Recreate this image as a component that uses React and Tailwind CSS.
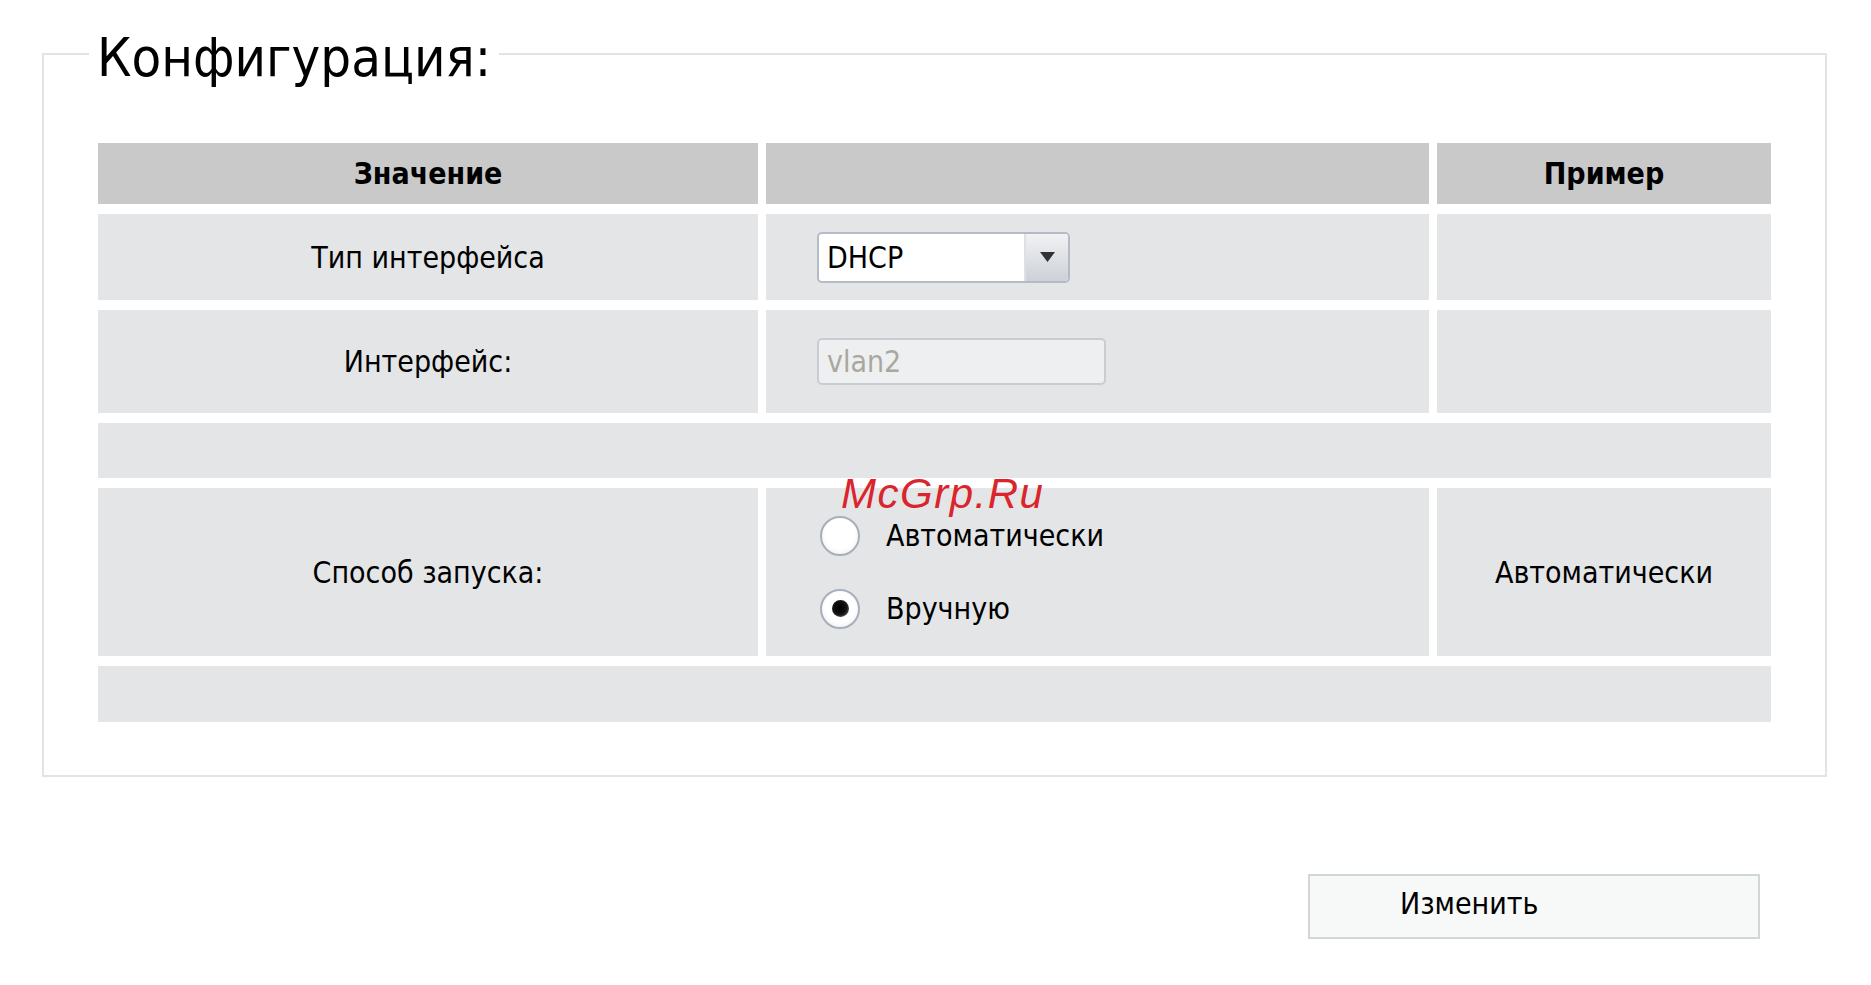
import React from "react";

function Radio({ checked }) {
  return (
    <div className="w-[40px] h-[40px] rounded-full border-2 border-[#a7afbb] bg-[radial-gradient(circle_at_50%_45%,#ffffff_55%,#e3e6ea_100%)] flex items-center justify-center shrink-0">
      {checked && (
        <div className="w-[17px] h-[17px] rounded-full bg-[radial-gradient(circle_at_45%_45%,#000000_0%,#111111_50%,#888888_100%)]" />
      )}
    </div>
  );
}

export default function App() {
  return (
    <div className="relative min-h-screen w-[1871px] bg-white pt-[18px] text-black font-['DejaVu_Sans_Condensed','DejaVu_Sans',sans-serif] font-stretch-condensed">
      <fieldset className="ml-[42px] w-[1785px] border-2 border-[#e3e3e3] px-[54px] pt-[53px] pb-[53px]">
        <legend className="-ml-[9px] px-[8px] text-[54px] leading-[72px] text-black">
          <span className="relative top-[4px]">Конфигурация:</span>
        </legend>
        <div className="grid grid-cols-[660px_663px_1fr] gap-x-[8px] gap-y-[10px] text-[30px]">
          {/* header */}
          <div className="h-[61px] bg-[#c9c9c9] flex items-center justify-center font-bold">Значение</div>
          <div className="h-[61px] bg-[#c9c9c9]" />
          <div className="h-[61px] bg-[#c9c9c9] flex items-center justify-center font-bold">Пример</div>

          {/* row 1 */}
          <div className="h-[86px] bg-[#e4e5e7] flex items-center justify-center">Тип интерфейса</div>
          <div className="h-[86px] bg-[#e4e5e7] flex items-center pl-[51px]">
            <div className="w-[253px] h-[51px] border-2 border-[#b4bbc6] rounded-[5px] bg-white flex overflow-hidden">
              <div className="flex-1 flex items-center pl-[8px] text-[30px]">DHCP</div>
              <div className="w-[44px] border-l-2 border-[#dde0e4] bg-linear-to-b from-[#f1f2f4] to-[#cdd1d7] flex items-center justify-center">
                <svg width="15" height="10" viewBox="0 0 15 10">
                  <path d="M0 0H15L7.5 10Z" fill="#2f3236" />
                </svg>
              </div>
            </div>
          </div>
          <div className="h-[86px] bg-[#e4e5e7]" />

          {/* row 2 */}
          <div className="h-[103px] bg-[#e4e5e7] flex items-center justify-center">Интерфейс:</div>
          <div className="h-[103px] bg-[#e4e5e7] flex items-center pl-[51px]">
            <div className="w-[289px] h-[47px] border-2 border-[#c9cdd3] rounded-[5px] bg-[#eeeff1] flex items-center pl-[8px] text-[#a9a89e]">
              vlan2
            </div>
          </div>
          <div className="h-[103px] bg-[#e4e5e7]" />

          {/* row 3 */}
          <div className="col-span-3 h-[55px] bg-[#e4e5e7]" />

          {/* row 4 */}
          <div className="h-[168px] bg-[#e4e5e7] flex items-center justify-center">Способ запуска:</div>
          <div className="h-[168px] bg-[#e4e5e7] flex flex-col justify-center gap-[33px] pl-[54px]">
            <div className="flex items-center gap-[26px] h-[40px]">
              <Radio checked={false} />
              <span className="leading-[40px]">Автоматически</span>
            </div>
            <div className="flex items-center gap-[26px] h-[40px]">
              <Radio checked={true} />
              <span className="leading-[40px]">Вручную</span>
            </div>
          </div>
          <div className="h-[168px] bg-[#e4e5e7] flex items-center justify-center">Автоматически</div>

          {/* row 5 */}
          <div className="col-span-3 h-[56px] bg-[#e4e5e7]" />
        </div>
      </fieldset>

      <div className="flex justify-end pr-[111px] mt-[97px] pb-[40px]">
        <button className="w-[452px] h-[65px] border-2 border-[#d3d6d7] bg-[#f7f8f8] text-[30px] text-left pl-[90px] pb-[6px] text-black">
          Изменить
        </button>
      </div>

      <div className="absolute left-[841px] top-[473px] text-[42px] leading-none italic tracking-[1.5px] text-[#d9252b] font-['Liberation_Sans',sans-serif] pointer-events-none">
        McGrp.Ru
      </div>
    </div>
  );
}
